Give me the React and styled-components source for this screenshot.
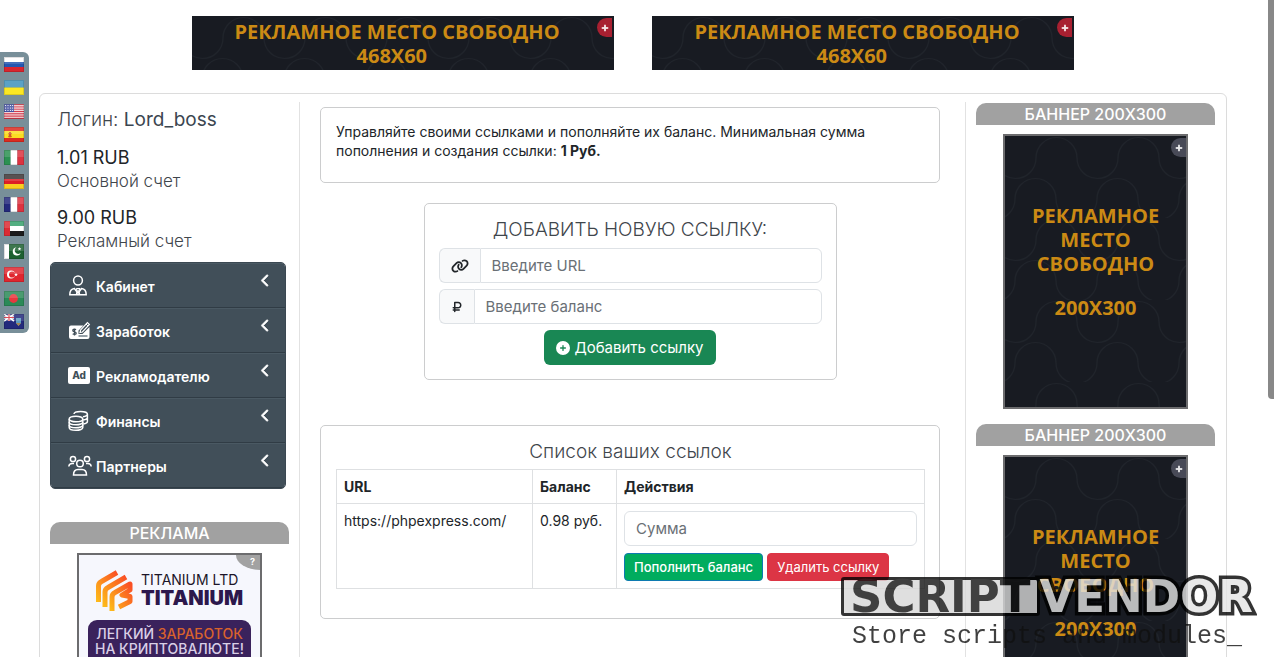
import React from "react";
import styled, { createGlobalStyle } from "styled-components";
import {
  FaLink,
  FaRubleSign,
  FaCirclePlus,
  FaPlus,
  FaChevronLeft,
} from "react-icons/fa6";

const menu = [
  { label: "Кабинет", Icon: CabinetIcon },
  { label: "Заработок", Icon: EarnIcon },
  { label: "Рекламодателю", Icon: AdIcon },
  { label: "Финансы", Icon: CoinsIcon },
  { label: "Партнеры", Icon: PartnersIcon },
];

const languages = [
  { name: "Русский", art: <Stripes colors={["#fff", "#2457b0", "#d9252e"]} /> },
  { name: "Українська", art: <Stripes colors={["#3f92bd", "#fbe724"]} /> },
  { name: "English", art: <FlagUsa /> },
  { name: "Español", art: <FlagSpain /> },
  {
    name: "Italiano",
    art: <Stripes vertical colors={["#2c9152", "#fff", "#dc3340"]} />,
  },
  { name: "Deutsch", art: <Stripes colors={["#3b3434", "#dd1f26", "#f9cf20"]} /> },
  {
    name: "Français",
    art: <Stripes vertical colors={["#23297c", "#fff", "#dc3340"]} />,
  },
  { name: "العربية", art: <FlagEmirates /> },
  { name: "اردو", art: <FlagPakistan /> },
  { name: "Türkçe", art: <FlagTurkey /> },
  { name: "বাংলা", art: <FlagBangladesh /> },
  { name: "English (Overseas)", art: <FlagTerritory /> },
];

function Stripes({ colors, vertical }) {
  const size = (vertical ? 20 : 15) / colors.length;
  return colors.map((color, i) =>
    vertical ? (
      <rect key={i} x={i * size} width={size} height="15" fill={color} />
    ) : (
      <rect key={i} y={i * size} width="20" height={size} fill={color} />
    )
  );
}

function FlagUsa() {
  return (
    <>
      <rect width="20" height="15" fill="#f7e6e8" />
      {[0, 2.3, 4.6, 6.9, 9.2, 11.5, 13.8].map((y) => (
        <rect key={y} y={y} width="20" height="1.2" fill="#d23b4c" />
      ))}
      <rect width="10" height="8" fill="#4450a0" />
      {[1.5, 4, 6.5].map((y) =>
        [1.5, 4, 6.5, 8.6].map((x) => (
          <circle key={x + "-" + y} cx={x} cy={y} r="0.6" fill="#fff" />
        ))
      )}
    </>
  );
}

function FlagSpain() {
  return (
    <>
      <rect width="20" height="15" fill="#dc2b20" />
      <rect y="4" width="20" height="7" fill="#fbdc22" />
      <path d="M4 6h1v-1h2v1h1l-1 2 1 2-2 .5-2-.5 1-2z" fill="#cf5b26" />
    </>
  );
}

function FlagEmirates() {
  return (
    <>
      <Stripes colors={["#35a06b", "#fff", "#1b1b1b"]} />
      <rect width="6" height="15" fill="#dc2b33" />
    </>
  );
}

function FlagPakistan() {
  return (
    <>
      <rect width="20" height="15" fill="#1c6030" />
      <rect width="5" height="15" fill="#fff" />
      <path
        d="M12.5 3.2a4.2 4.2 0 1 0 4.4 5.6a3.6 3.6 0 1 1-4.4-5.6z"
        fill="#fff"
      />
      <path d="m15.5 3 .5 1.2 1.3.1-1 .9.3 1.3-1.1-.7-1.1.7.3-1.3-1-.9 1.3-.1z" fill="#fff" />
    </>
  );
}

function FlagTurkey() {
  return (
    <>
      <rect width="20" height="15" fill="#e0262f" />
      <circle cx="7" cy="7.5" r="4" fill="#fff" />
      <circle cx="8.1" cy="7.5" r="3.1" fill="#e0262f" />
      <path d="m12 5.6.5 1.3 1.4.1-1.1.9.4 1.3-1.2-.7-1.2.7.4-1.3-1.1-.9 1.4-.1z" fill="#fff" />
    </>
  );
}

function FlagBangladesh() {
  return (
    <>
      <rect width="20" height="15" fill="#2b8a58" />
      <circle cx="9.5" cy="7.5" r="4.4" fill="#e8383f" />
    </>
  );
}

function FlagTerritory() {
  return (
    <>
      <rect width="20" height="15" fill="#232a7c" />
      <path d="M0 0l10 7M10 0L0 7" stroke="#fff" strokeWidth="1.6" />
      <path d="M5 0v7M0 3.5h10" stroke="#fff" strokeWidth="2.4" />
      <path d="M5 0v7M0 3.5h10" stroke="#d6303c" strokeWidth="1.2" />
      <path d="M12 4h5v5l-2.500 3-2.500-3z" fill="#5f9cc0" />
      <path d="M12 9h5l-2.500 3z" fill="#a7854f" />
    </>
  );
}

function CabinetIcon() {
  return (
    <MenuSvg viewBox="0 0 20 22" width="20" height="22">
      <circle cx="10" cy="5.500" r="4.400" />
      <path d="M1.800 19.800c0-4 1.600-6 4.600-6.300L10 18.200l3.600-4.700c3 .3 4.600 2.300 4.600 6.300z" />
      <path d="M8.300 13.500h3.400L10.700 16l1 3.500M8.300 13.500l1 2.500-1 3.500" strokeWidth="1.200" />
    </MenuSvg>
  );
}

function EarnIcon() {
  return (
    <MenuSvg viewBox="0 0 24 22" width="24" height="22">
      <path
        d="M3 5.500h12.500l-5 5V14h4l7-7v10a2 2 0 0 1-2 2H3a2 2 0 0 1-2-2V7.500a2 2 0 0 1 2-2z"
        fill="#fff"
        stroke="none"
      />
      <path d="M12 12.500l.6-2.500 6.800-7.500 2 2-7 7.500z" fill="#414f59" strokeWidth="1.2" />
      <path d="M18 4l2 2" strokeWidth="1" />
      <path d="M10.500 16h9" stroke="#72808a" strokeWidth="1.400" />
      <path
        d="M8 9.700c-1-.9-3.200-.7-3.200.7 0 1.700 3.400 1 3.400 2.800 0 1.500-2.400 1.600-3.500.6M6.500 8.500v7"
        stroke="#414f59"
        strokeWidth="1.300"
      />
    </MenuSvg>
  );
}

function AdIcon() {
  return (
    <MenuSvg viewBox="0 0 22 20" width="22" height="20">
      <rect y="1" width="22" height="17" rx="2" fill="#fff" stroke="none" />
      <text
        x="11"
        y="13"
        textAnchor="middle"
        fill="#414f59"
        stroke="none"
        fontSize="10"
        fontWeight="800"
      >
        Ad
      </text>
    </MenuSvg>
  );
}

function CoinsIcon() {
  return (
    <MenuSvg viewBox="0 0 21 22" width="21" height="22">
      <ellipse cx="8" cy="9" rx="6.800" ry="2.800" />
      <path d="M1.200 9v8.500c0 1.600 3 2.800 6.800 2.800s6.800-1.200 6.800-2.800V9" />
      <path d="M1.200 12c0 1.600 3 2.800 6.800 2.800s6.800-1.200 6.800-2.800M1.200 15c0 1.600 3 2.800 6.800 2.800s6.800-1.200 6.800-2.800" />
      <path d="M6 4c0-1.500 3-2.600 6.600-2.600s6.800 1.200 6.800 2.700-2 2.400-4.500 2.700M19.400 4v7.500c0 1.300-2 2.200-4.200 2.500M19.400 7.500c0 1.300-2 2.200-4.200 2.500" />
    </MenuSvg>
  );
}

function PartnersIcon() {
  return (
    <MenuSvg viewBox="0 0 24 22" width="24" height="22">
      <circle cx="5" cy="4" r="2.600" />
      <circle cx="19" cy="4" r="2.600" />
      <circle cx="12" cy="8.500" r="3.300" />
      <path d="M5.500 20c0-3.500 2-5.500 4.500-5.500h4c2.500 0 4.500 2 4.500 5.500z" />
      <path d="M.8 11.500C1 9.500 2.500 8.500 4.200 8.500H6M23.200 11.500c-.2-2-1.700-3-3.400-3H18" />
    </MenuSvg>
  );
}

// interlaced waves behind the empty ad slots
function Pattern({ id }) {
  return (
    <PatternSvg aria-hidden="true">
      <defs>
        <pattern id={id} width="82" height="82" patternUnits="userSpaceOnUse">
          <g fill="none" stroke="#20242b" strokeWidth="1.200">
            <path d="M-10 22a20.500 20.500 0 1 0 41 0a20.500 20.500 0 1 1 41 0a20.500 20.500 0 1 0 41 0" />
            <path d="M-31 63a20.500 20.500 0 1 0 41 0a20.500 20.500 0 1 1 41 0a20.500 20.500 0 1 0 41 0" />
          </g>
        </pattern>
      </defs>
      <rect width="100%" height="100%" fill={"url(#" + id + ")"} />
    </PatternSvg>
  );
}

function TallBanner({ id }) {
  return (
    <>
      <SectionTitle>БАННЕР 200X300</SectionTitle>
      <TallSlot>
        <Pattern id={id} />
        <SlotText href="#">
          РЕКЛАМНОЕ
          <br />
          МЕСТО
          <br />
          СВОБОДНО
        </SlotText>
        <SlotText href="#">200X300</SlotText>
        <PlusBadge aria-label="Добавить баннер">
          <FaPlus size={8} />
        </PlusBadge>
      </TallSlot>
    </>
  );
}

function WideBanner({ id }) {
  return (
    <WideSlot>
      <Pattern id={id} />
      <SlotText href="#">
        РЕКЛАМНОЕ МЕСТО СВОБОДНО
        <br />
        468X60&nbsp;&nbsp;
      </SlotText>
      <PlusBadge $red aria-label="Добавить баннер">
        <FaPlus size={8} />
      </PlusBadge>
    </WideSlot>
  );
}

function App() {
  return (
    <Page>
      <GlobalStyle />
      <TopBanners>
        <WideBanner id="wide-left" />
        <WideBanner id="wide-right" />
      </TopBanners>

      <Layout>
        <Sidebar>
          <Account>
            <Login>
              Логин: <b>Lord_boss</b>
            </Login>
            <Balance>
              <b>1.01 RUB</b>
              Основной счет
            </Balance>
            <Balance>
              <b>9.00 RUB</b>
              Рекламный счет
            </Balance>
          </Account>
          <Menu>
            {menu.map(({ label, Icon }) => (
              <MenuItem key={label}>
                <Icon />
                <MenuLabel>{label}</MenuLabel>
                <FaChevronLeft size={13} />
              </MenuItem>
            ))}
          </Menu>
          <SectionTitle>РЕКЛАМА</SectionTitle>
          <Promo href="#">
            <PromoBrand>
              <svg width="38" height="42" viewBox="0 0 38 42">
                <defs>
                  <linearGradient id="flame" x1="1" y1="0" x2="0" y2="1">
                    <stop offset="0" stopColor="#fa4f24" />
                    <stop offset="1" stopColor="#fdb81a" />
                  </linearGradient>
                </defs>
                <g
                  fill="none"
                  stroke="url(#flame)"
                  strokeWidth="5"
                  strokeLinejoin="round"
                >
                  <path d="M3.500 33V17q0-3 3-4.500L22 3.500" />
                  <path d="M10 38V23q0-3 3-4.500L31 8" />
                  <path d="M17 42V28q0-3 3-4.500l15-8.500v6l-8 5 8 1.500v5L24 38" />
                </g>
              </svg>
              <PromoName>
                TITANIUM LTD
                <b>TITANIUM</b>
              </PromoName>
            </PromoBrand>
            <PromoPlate>
              ЛЕГКИЙ <em>ЗАРАБОТОК</em>
              <br />
              НА КРИПТОВАЛЮТЕ!
            </PromoPlate>
            <Corner>?</Corner>
          </Promo>
        </Sidebar>

        <Main>
          <Card>
            <Intro>
              Управляйте своими ссылками и пополняйте их баланс. Минимальная
              сумма пополнения и создания ссылки: <b>1 Руб.</b>
            </Intro>
          </Card>

          <FormCard as="form" onSubmit={(e) => e.preventDefault()}>
            <Heading>ДОБАВИТЬ НОВУЮ ССЫЛКУ:</Heading>
            <InputGroup>
              <Addon htmlFor="url" aria-label="URL">
                <FaLink size={18} />
              </Addon>
              <Field id="url" placeholder="Введите URL" />
            </InputGroup>
            <InputGroup>
              <Addon htmlFor="balance" aria-label="Баланс">
                <FaRubleSign size={12} />
              </Addon>
              <Field id="balance" placeholder="Введите баланс" />
            </InputGroup>
            <AddButton>
              <FaCirclePlus size={14} />
              Добавить ссылку
            </AddButton>
          </FormCard>

          <Card>
            <Heading>Список ваших ссылок</Heading>
            <Table>
              <thead>
                <tr>
                  <th>URL</th>
                  <th>Баланс</th>
                  <th>Действия</th>
                </tr>
              </thead>
              <tbody>
                <tr>
                  <td>https://phpexpress.com/</td>
                  <td>0.98 руб.</td>
                  <td>
                    <Field aria-label="Сумма" placeholder="Сумма" $rounded />
                    <Actions>
                      <SmallButton>Пополнить баланс</SmallButton>
                      <SmallButton $danger>Удалить ссылку</SmallButton>
                    </Actions>
                  </td>
                </tr>
              </tbody>
            </Table>
          </Card>
        </Main>

        <Aside>
          <TallBanner id="tall-first" />
          <TallBanner id="tall-second" />
        </Aside>
      </Layout>

      <Languages>
        {languages.map(({ name, art }) => (
          <a key={name} href="#" aria-label={name}>
            <svg width="20" height="15" viewBox="0 0 20 15">
              {art}
              <rect width="20" height="7" fill="#fff" opacity="0.15" />
              <rect
                x="0.5"
                y="0.5"
                width="19"
                height="14"
                fill="none"
                stroke="#000"
                opacity="0.12"
              />
            </svg>
          </a>
        ))}
      </Languages>

      <Watermark>
        <Brand>
          <span>SCRIPT</span>
          <b>VENDOR</b>
        </Brand>
        <Tagline>Store scripts and modules_</Tagline>
      </Watermark>
      <ScrollThumb />
    </Page>
  );
}

const GlobalStyle = createGlobalStyle`
  * {
    box-sizing: border-box;
  }

  html {
    scrollbar-width: none;
  }

  body {
    margin: 0;
    background: #fff;
    color: #212529;
    font-family: Inter, "Noto Sans", sans-serif;
    font-size: 14px;
    line-height: 19px;
  }

  button,
  input {
    font: inherit;
  }

  a {
    text-decoration: none;
  }
`;

const Page = styled.div`
  padding: 16px 47px 24px 39px;
`;

const TopBanners = styled.div`
  display: flex;
  justify-content: center;
  gap: 38px;
  margin-bottom: 23px;
`;

const Slot = styled.div`
  position: relative;
  display: flex;
  flex-direction: column;
  align-items: center;
  justify-content: center;
  overflow: hidden;
  background: #181b22;
  text-align: center;
`;

const WideSlot = styled(Slot)`
  width: 422px;
  height: 54px;
  padding: 2px 12px 0 0;
`;

const TallSlot = styled(Slot)`
  width: 185px;
  height: 275px;
  margin: 9px auto 15px;
  gap: 20px;
  padding-bottom: 20px;
  border: 2px solid #6c6c6e;
`;

const PatternSvg = styled.svg`
  position: absolute;
  inset: 0;
  width: 100%;
  height: 100%;
`;

const SlotText = styled.a`
  position: relative;
  color: #cb8a14;
  font-family: "Open Sans", sans-serif;
  font-size: 20px;
  font-weight: 700;
  line-height: 24px;
`;

const PlusBadge = styled.button`
  position: absolute;
  top: 2px;
  right: ${(props) => (props.$red ? "2px" : "0")};
  display: grid;
  place-items: center;
  width: 15px;
  height: 19px;
  padding: 0;
  border: 0;
  border-radius: 10px 0 0 10px;
  background: ${(props) => (props.$red ? "#a82031" : "#484a57")};
  color: #fff;

  path {
    stroke: #fff;
    stroke-width: 40px;
  }
`;

const Layout = styled.div`
  display: grid;
  grid-template-columns: 260px 1fr 261px;
  padding-top: 8px;
  border: 1px solid #dcdcdc;
  border-radius: 6px;
`;

const Sidebar = styled.aside`
  padding: 0 10px;
  border-right: 1px solid #e2e2e2;
`;

const Account = styled.div`
  padding: 6px 7px 0;
  color: #3f464c;
  font-weight: 300;
`;

const Login = styled.div`
  font-size: 19px;
  line-height: 24px;

  b {
    font-weight: 400;
    color: #3b4650;
  }
`;

const Balance = styled.div`
  margin-top: 14px;
  font-size: 17px;
  line-height: 22px;

  b {
    display: block;
    color: #212529;
    font-size: 18px;
    line-height: 24px;
    font-weight: 400;
  }
`;

const Menu = styled.nav`
  width: 236px;
  margin: 10px 0 33px;
  border: 1px solid #3b4852;
  border-radius: 5px;
  overflow: hidden;
`;

const MenuItem = styled.button`
  display: grid;
  grid-template-columns: 28px 1fr auto;
  align-items: center;
  width: 100%;
  height: 45px;
  padding: 0 13px 0 17px;
  border: 0;
  border-top: 1px solid #4a5963;
  border-bottom: 1px solid #303c45;
  background: #414f59;
  color: #fff;

  > svg:last-child {
    margin-bottom: 10px;
    overflow: visible;
    stroke: #fff;
    stroke-width: 30px;
  }
`;

const MenuLabel = styled.span`
  padding-top: 2px;
  text-align: left;
  font-weight: 600;
`;

const MenuSvg = styled.svg`
  fill: none;
  stroke: #fff;
  stroke-width: 1.5px;
`;

const SectionTitle = styled.div`
  height: 22px;
  border-radius: 10px 10px 0 0;
  background: #a1a1a1;
  color: #fff;
  font-size: 16px;
  font-weight: 500;
  line-height: 22px;
  text-align: center;
`;

const Promo = styled.a`
  position: relative;
  display: block;
  width: 185px;
  height: 275px;
  margin: 9px auto 0;
  padding: 14px 9px;
  border: 2px solid #6c6c6e;
  background: #f6f7fd;
  color: #1c1528;
`;

const PromoBrand = styled.div`
  display: flex;
  align-items: center;
  gap: 8px;
  margin-left: 7px;
`;

const PromoName = styled.div`
  font-size: 14px;
  line-height: 16px;

  b {
    display: block;
    color: #2c184c;
    font-size: 20px;
    font-weight: 900;
    line-height: 20px;
  }
`;

const PromoPlate = styled.div`
  height: 60px;
  margin-top: 9px;
  padding-top: 6px;
  border-radius: 9px;
  background: #3a225c;
  color: #d9cfe6;
  font-size: 14px;
  font-weight: 500;
  line-height: 15px;
  text-align: center;

  em {
    color: #d9622c;
    font-style: normal;
  }
`;

const Corner = styled.span`
  position: absolute;
  top: 0;
  right: 0;
  width: 24px;
  height: 15px;
  padding-right: 5px;
  border-bottom-left-radius: 24px 15px;
  background: #a2a2a2;
  color: #fff;
  font-size: 9px;
  font-weight: 700;
  line-height: 14px;
  text-align: right;
`;

const Main = styled.main`
  padding: 5px 25px 0 20px;
`;

const Card = styled.section`
  padding: 14px 14px 29px 15px;
  border: 1px solid #cccdce;
  border-radius: 5px;
`;

const Intro = styled.p`
  margin: 0 0 -7px;
`;

const FormCard = styled(Card)`
  width: 413px;
  margin: 20px auto 45px;
  padding: 14px;
  display: flex;
  flex-direction: column;
  align-items: center;
  gap: 6px;
`;

const Heading = styled.h2`
  margin: 0;
  color: #3f464c;
  font-size: 19px;
  font-weight: 300;
  line-height: 24px;
  text-align: center;
`;

const InputGroup = styled.div`
  display: flex;
  width: 100%;
`;

const Addon = styled.label`
  display: grid;
  place-items: center;
  padding: 0 11px;
  border: 1px solid #dee2e6;
  border-right: 0;
  border-radius: 6px 0 0 6px;
  background: #f8f9fa;
`;

const Field = styled.input`
  flex: 1;
  width: 100%;
  height: 35px;
  padding: 0 11px;
  border: 1px solid #dee2e6;
  border-radius: ${(props) => (props.$rounded ? "6px" : "0 6px 6px 0")};
  background: #fff;
  font-size: 15px;

  &::placeholder {
    color: #6a7076;
    opacity: 1;
  }
`;

const AddButton = styled.button`
  display: flex;
  align-items: center;
  gap: 4px;
  height: 35px;
  padding: 0 12px;
  border: 0;
  border-radius: 6px;
  background: #198754;
  color: #fff;
  font-size: 15px;
`;

const Table = styled.table`
  width: 100%;
  margin-top: 5px;
  border-collapse: collapse;

  th,
  td {
    padding: 7px;
    border: 1px solid #dee0e2;
    text-align: left;
    vertical-align: top;
  }

  th:nth-child(1) {
    width: 196px;
  }

  th:nth-child(2) {
    width: 84px;
  }

  td {
    white-space: nowrap;
  }
`;

const Actions = styled.div`
  display: flex;
  gap: 4px;
  margin-top: 7px;
`;

const SmallButton = styled.button`
  height: 28px;
  padding: 0 9px;
  border: 1px solid ${(props) => (props.$danger ? "#dc3545" : "#0d7ab0")};
  border-radius: 4px;
  background: ${(props) => (props.$danger ? "#dc3545" : "#00ac5e")};
  color: #fff;
  font-size: 13px;
  font-weight: ${(props) => (props.$danger ? 400 : 500)};
`;

const Aside = styled.aside`
  padding: 1px 11px 0 10px;
  border-left: 1px solid #e2e2e2;
`;

const Languages = styled.nav`
  position: fixed;
  top: 52px;
  left: 0;
  display: flex;
  flex-direction: column;
  justify-content: space-between;
  width: 29px;
  height: 281px;
  padding: 5px 4px 4px;
  border-radius: 0 6px 6px 0;
  background: #788f99;

  a,
  svg {
    display: block;
  }
`;

const Watermark = styled.div`
  position: fixed;
  right: 14px;
  bottom: 0;
  width: 419px;
  opacity: 0.8;
  pointer-events: none;
`;

const Brand = styled.div`
  display: flex;
  align-items: center;
  height: 39px;
  font-family: "DejaVu Sans", sans-serif;
  font-size: 45px;
  font-weight: 700;
  line-height: 33px;

  span {
    padding: 0 6px;
    border: 3px solid #000;
    border-radius: 3px;
    background: #d7d7d7;
    color: #111;
  }

  b {
    color: #e4e4e4;
    -webkit-text-stroke: 7px #000;
    paint-order: stroke fill;
  }
`;

const Tagline = styled.div`
  padding-left: 11px;
  color: #111;
  font-family: "Liberation Mono", monospace;
  font-size: 25px;
  line-height: 41px;
`;

const ScrollThumb = styled.div`
  position: fixed;
  top: 0;
  right: 0;
  width: 6px;
  height: 399px;
  border-radius: 0 0 0 4px;
  background: #888;
`;

export default App;
